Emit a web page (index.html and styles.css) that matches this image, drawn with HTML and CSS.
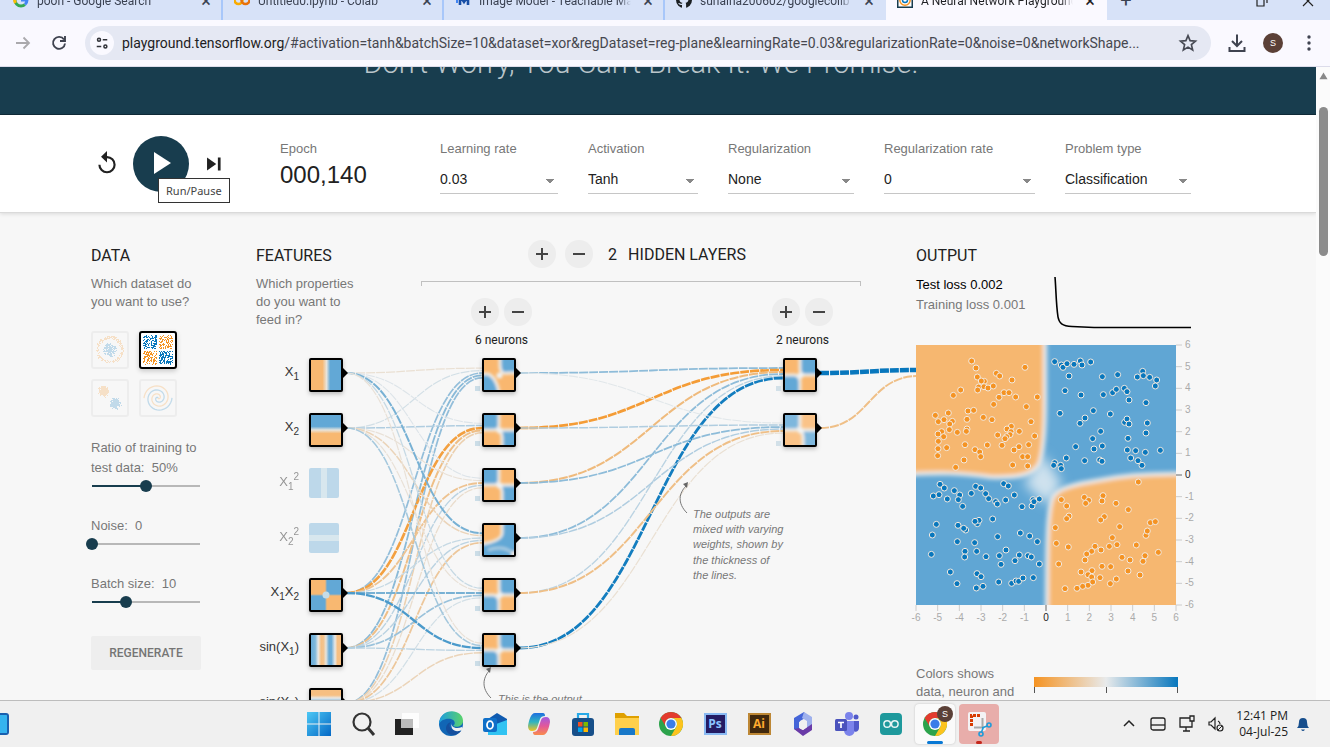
FILE: index.html
```html
<!DOCTYPE html>
<html lang="en">
<head>
<meta charset="utf-8">
<title>A Neural Network Playground</title>
<link rel="stylesheet" href="styles.css">
</head>
<body>
<header class="tabstrip">
  <div class="tab">
    <svg class="favicon" viewBox="0 0 16 16"><circle cx="8" cy="8" r="6" fill="none" stroke="#34a853" stroke-width="3" stroke-dasharray="14 40" stroke-dashoffset="-5"/><path d="M2.500 11A6 6 0 0 1 2.500 5" fill="none" stroke="#fbbc05" stroke-width="3"/><path d="M3 4A6 6 0 0 1 12 4" fill="none" stroke="#ea4335" stroke-width="3"/><path d="M8 8h6a6 6 0 0 1-2 4.500" fill="none" stroke="#4285f4" stroke-width="3"/></svg>
    <span class="tab-title">pooh - Google Search</span><button class="tab-close" aria-label="Close tab">×</button>
  </div>
  <div class="tab">
    <svg class="favicon" viewBox="0 0 16 16"><circle cx="4.500" cy="8" r="4" fill="none" stroke="#f9ab00" stroke-width="2.600"/><circle cx="11.500" cy="8" r="4" fill="none" stroke="#e8710a" stroke-width="2.600"/></svg>
    <span class="tab-title">Untitled0.ipynb - Colab</span><button class="tab-close" aria-label="Close tab">×</button>
  </div>
  <div class="tab">
    <svg class="favicon" viewBox="0 0 16 16"><path d="M5 13V4l4 6 4-6v9" fill="none" stroke="#174ea6" stroke-width="2.600"/><path d="M2 7v4" stroke="#4285f4" stroke-width="2"/></svg>
    <span class="tab-title">Image Model - Teachable Machine</span><button class="tab-close" aria-label="Close tab">×</button>
  </div>
  <div class="tab">
    <svg class="favicon" viewBox="0 0 16 16"><circle cx="8" cy="8" r="8" fill="#1b1f23"/><path d="M6 16v-3C3 13.500 3 11.500 2 11c2-.5 2 1 4 .8l.4-1C3 10.500 3 7 4.200 5.500 4 4 4.300 3.500 4.500 3L6.500 4h3l2-1c.3.800.4 1.500.2 2.500C13 7.500 12.500 10.500 9.600 10.800c.5.5.5 1.200.5 2V16z" fill="#d7e2f8"/></svg>
    <span class="tab-title">sunaina200602/googlecolib</span><button class="tab-close" aria-label="Close tab">×</button>
  </div>
  <div class="tab tab-active">
    <svg class="favicon" viewBox="0 0 16 16"><path d="M0 0h16v16H0z" fill="#183d4e"/><path d="M1.500 1.500h13v13h-13z" fill="#fff"/><circle cx="8" cy="8" r="5.200" fill="none" stroke="#f59322" stroke-width="1.500"/><circle cx="8" cy="8" r="2.500" fill="none" stroke="#0877bd" stroke-width="1.500"/></svg>
    <span class="tab-title">A Neural Network Playground</span><button class="tab-close" aria-label="Close tab">×</button>
  </div>
  <button class="new-tab" aria-label="New tab">+</button>
  <div class="window-buttons">
    <svg viewBox="0 0 14 14"><path d="M2 4h7v8H2zM5 2h7v7" fill="none" stroke="#222" stroke-width="1.200"/></svg>
    <svg viewBox="0 0 14 14"><path d="M2 2l10 10M12 2L2 12" stroke="#222" stroke-width="1.200"/></svg>
  </div>
</header>

<div class="toolbar">
  <button class="tool" aria-label="Forward"><svg viewBox="0 0 24 24"><path d="M5 12h13M12.500 6.500 18 12l-5.500 5.500" fill="none" stroke="#aaa9ad" stroke-width="1.800"/></svg></button>
  <button class="tool" aria-label="Reload"><svg viewBox="0 0 24 24"><path d="M17 8.500A6 6 0 1 0 18 12.500M18 5v5h-5" fill="none" stroke="#3f4350" stroke-width="1.900"/></svg></button>
  <div class="omnibox">
    <span class="site-info"><svg viewBox="0 0 24 24" fill="none" stroke="#303238" stroke-width="2"><circle cx="8" cy="7.500" r="2"/><path d="M13 7.500h6M5 16.500h6"/><circle cx="16.500" cy="16.500" r="2"/></svg></span>
    <span class="url"><span class="host">playground.tensorflow.org</span>/#activation=tanh&amp;batchSize=10&amp;dataset=xor&amp;regDataset=reg-plane&amp;learningRate=0.03&amp;regularizationRate=0&amp;noise=0&amp;networkShape...</span>
    <svg class="star" viewBox="0 0 24 24"><path d="M12 4l2.300 5.400 5.900.5-4.500 3.900 1.400 5.800L12 16.500l-5.100 3.100 1.400-5.800-4.500-3.900 5.900-.5z" fill="none" stroke="#474a54" stroke-width="1.800"/></svg>
  </div>
  <button class="tool download" aria-label="Downloads"><svg viewBox="0 0 24 24"><path d="M12 3.500v11M7 10l5 5 5-5M4.500 16v4h15v-4" fill="none" stroke="#3f4350" stroke-width="2"/></svg></button>
  <button class="avatar" aria-label="Profile">S</button>
  <button class="tool" aria-label="Menu"><svg viewBox="0 0 24 24" fill="#3f4350"><circle cx="12" cy="6" r="1.700"/><circle cx="12" cy="12" r="1.700"/><circle cx="12" cy="18" r="1.700"/></svg></button>
</div>

<div class="viewport">
<div class="page">
  <div class="banner"><p>Don’t Worry, You Can’t Break It. We Promise.</p></div>

  <div class="controls">
    <div class="run-buttons">
      <button class="icon-button" aria-label="Reset"><svg viewBox="0 0 24 24"><path d="M12 5.500V1L6.500 6.300 12 11.500V7.500a6 6 0 1 1-6 6H4a8 8 0 1 0 8-8z" fill="#212121"/></svg></button>
      <button class="play" aria-label="Run/Pause"><svg viewBox="0 0 36 36"><path d="M11 17v11l17-11L11 6z" fill="#fff"/></svg><span class="tooltip">Run/Pause</span></button>
      <button class="icon-button" aria-label="Step"><svg viewBox="0 0 24 24"><path d="M6.500 7v12l8.500-6zM16.500 7H19v12h-2.500z" fill="#212121"/></svg></button>
    </div>
    <div class="epoch"><div class="label">Epoch</div><div class="epoch-value">000,140</div></div>
    <div class="fields">
      <label class="field f118"><span class="label">Learning rate</span><select><option>0.03</option></select></label>
      <label class="field f110"><span class="label">Activation</span><select><option>Tanh</option></select></label>
      <label class="field f126"><span class="label">Regularization</span><select><option>None</option></select></label>
      <label class="field f151"><span class="label">Regularization rate</span><select><option>0</option></select></label>
      <label class="field f126"><span class="label">Problem type</span><select><option>Classification</option></select></label>
    </div>
  </div>

  <main class="main">
    <section class="data">
      <h2>Data</h2>
      <p class="hint">Which dataset do you want to use?</p>
      <div class="datasets">
        <button class="dataset" aria-label="Circle"><svg id="set-circle" viewBox="0 0 34 34"></svg></button>
        <button class="dataset selected" aria-label="Exclusive or"><svg id="set-xor" viewBox="0 0 34 34"></svg></button>
        <button class="dataset" aria-label="Gaussian"><svg id="set-gauss" viewBox="0 0 34 34"></svg></button>
        <button class="dataset" aria-label="Spiral"><svg id="set-spiral" viewBox="0 0 34 34"></svg></button>
      </div>
      <div class="slider"><label for="ratio">Ratio of training to test data:&nbsp; 50%</label><input id="ratio" type="range" min="10" max="90" value="50" style="--fill:50%"></div>
      <div class="slider"><label for="noise">Noise:&nbsp; 0</label><input id="noise" type="range" min="0" max="50" value="0" style="--fill:0%"></div>
      <div class="slider"><label for="batch">Batch size:&nbsp; 10</label><input id="batch" type="range" min="1" max="30" value="10" style="--fill:31%"></div>
      <button class="regenerate">Regenerate</button>
    </section>

    <section class="network">
      <div class="network-head">
        <div class="features-intro"><h2>Features</h2><p class="hint">Which properties do you want to feed in?</p></div>
        <div class="hidden-head">
          <div class="layer-count">
            <button class="round plus" aria-label="Add layer"></button><button class="round" aria-label="Remove layer"></button>
            <span>2</span><span>Hidden layers</span>
          </div>
          <div class="bracket"></div>
          <div class="layer-controls">
            <div class="layer"><div class="pair"><button class="round plus" aria-label="Add neuron"></button><button class="round" aria-label="Remove neuron"></button></div>6 neurons</div>
            <div class="layer"><div class="pair"><button class="round plus" aria-label="Add neuron"></button><button class="round" aria-label="Remove neuron"></button></div>2 neurons</div>
          </div>
        </div>
      </div>
      <svg class="graph" viewBox="256 350 660 390">
        <defs>
          <filter id="soft" x="-30%" y="-30%" width="160%" height="160%"><feGaussianBlur stdDeviation="1.400"/></filter>
          <filter id="shadow" x="-30%" y="-30%" width="160%" height="170%"><feDropShadow dx="0" dy="2" stdDeviation="2" flood-opacity=".25"/></filter>
          <clipPath id="cell"><rect width="30" height="30"/></clipPath>
          <linearGradient id="gx"><stop offset=".38" stop-color="#f8b871"/><stop offset=".52" stop-color="#e8e4dc"/><stop offset=".64" stop-color="#62a8d6"/></linearGradient>
          <linearGradient id="gy" x2="0" y2="1"><stop offset=".38" stop-color="#62a8d6"/><stop offset=".5" stop-color="#e8e4dc"/><stop offset=".62" stop-color="#f8b871"/></linearGradient>
          <linearGradient id="sx"><stop offset="0" stop-color="#6aacd8"/><stop offset=".14" stop-color="#7fb8dc"/><stop offset=".24" stop-color="#e8e8e6"/><stop offset=".34" stop-color="#f6bf82"/><stop offset=".42" stop-color="#f3c48f"/><stop offset=".5" stop-color="#e8e4dc"/><stop offset=".6" stop-color="#6aacd8"/><stop offset=".68" stop-color="#6aacd8"/><stop offset=".8" stop-color="#e8e8e6"/><stop offset=".88" stop-color="#f6bf82"/><stop offset="1" stop-color="#f6bf82"/></linearGradient>
          <linearGradient id="sy" x2="0" y2="1"><stop offset="0" stop-color="#f6bf82"/><stop offset=".17" stop-color="#f6bf82"/><stop offset=".27" stop-color="#e8e8e6"/><stop offset=".4" stop-color="#6aacd8"/><stop offset="1" stop-color="#f6bf82"/></linearGradient>
        </defs>
        <g id="links"></g>
        <g id="nodes"></g>
        <g opacity=".38">
          <rect x="309" y="468" width="30" height="30" rx="2" fill="#62a8d6"/><rect x="321" y="468" width="6" height="30" fill="#a8cfe0"/>
          <rect x="309" y="523" width="30" height="30" rx="2" fill="#62a8d6"/><rect x="309" y="535" width="30" height="6" fill="#a8cfe0"/>
        </g>
        <g class="feature-names" text-anchor="end">
          <text x="299" y="376">X<tspan class="sub" dy="4">1</tspan></text>
          <text x="299" y="431">X<tspan class="sub" dy="4">2</tspan></text>
          <text x="299" y="486" opacity=".5">X<tspan class="sub" dy="4">1</tspan><tspan class="sub" dy="-10">2</tspan></text>
          <text x="299" y="541" opacity=".5">X<tspan class="sub" dy="4">2</tspan><tspan class="sub" dy="-10">2</tspan></text>
          <text x="299" y="596">X<tspan class="sub" dy="4">1</tspan><tspan dy="-4">X</tspan><tspan class="sub" dy="4">2</tspan></text>
          <text x="299" y="651">sin(X<tspan class="sub" dy="4">1</tspan><tspan dy="-4">)</tspan></text>
          <text x="299" y="706">sin(X<tspan class="sub" dy="4">2</tspan><tspan dy="-4">)</tspan></text>
        </g>
        <g fill="none" stroke="#777"><path d="M687 513C677 503 679 493 686 486"/><path d="M491 698C481 688 483 678 489 671"/></g>
        <path d="M688 482l-1 6-4-4zM491 667l-1 6-4-4z" fill="#666"/>
        <text class="note"><tspan x="693" y="518">The outputs are</tspan><tspan x="693" y="533">mixed with varying</tspan><tspan x="693" y="548">weights, shown by</tspan><tspan x="693" y="564">the thickness of</tspan><tspan x="693" y="579">the lines.</tspan></text>
        <text class="note" x="498" y="703">This is the output</text>
      </svg>
    </section>

    <section class="output">
      <h2>Output</h2>
      <div class="metrics">
        <div><div class="test">Test loss 0.002</div><div class="train">Training loss 0.001</div></div>
        <svg class="curve" viewBox="0 0 137 54"><path d="M1 1C2 12 2 28 4 41C5 47 8 50 18 50.500L40 51.500H137" fill="none" stroke="#000" stroke-width="1.600"/></svg>
      </div>
      <svg class="plot" viewBox="916 345 275 290">
        <defs>
          <clipPath id="plot-clip"><rect x="916" y="345" width="260" height="260"/></clipPath>
          <filter id="edge" x="-10%" y="-10%" width="120%" height="120%"><feGaussianBlur stdDeviation="2"/></filter>
          <filter id="haze" x="-100%" y="-100%" width="300%" height="300%"><feGaussianBlur stdDeviation="6"/></filter>
        </defs>
        <g clip-path="url(#plot-clip)">
          <rect x="916" y="345" width="260" height="260" fill="#60a6d4"/>
          <path d="M1024 484L1043 454L1062 484L1048 505Z" fill="#cfe2ee" filter="url(#haze)"/>
          <g filter="url(#edge)" fill="#f6b770" stroke="#eeeceb" stroke-width="4">
            <path d="M900 330H1045V400C1045 430 1044 452 1039 464C1033 475 1018 478 990 477C962 473 940 472 900 475Z"/>
            <path d="M1190 474C1150 473 1125 475 1100 480C1075 484 1058 488 1053 497C1048 508 1047 530 1047 620H1190Z"/>
          </g>
          <g id="points"></g>
        </g>
        <g id="axes" class="axes"></g>
      </svg>
      <div class="legend">
        <p>Colors shows data, neuron and weight values.</p>
        <div class="scale"><div class="gradient"></div><div class="ticks"><i></i><i></i><i></i></div><div class="scale-labels"><span>-1</span><span>0</span><span>1</span></div></div>
      </div>
    </section>
  </main>
</div>
<div class="scrollbar"><svg viewBox="0 0 10 8"><path d="M5 0l4.500 7.500h-9z" fill="#888"/></svg><div class="thumb"></div></div>
</div>

<footer class="taskbar">
  <div class="widget"></div>
  <nav class="apps">
    <button aria-label="Start"><svg viewBox="0 0 26 26"><defs><linearGradient id="win" x2="1" y2="1"><stop stop-color="#4cc8f5"/><stop offset="1" stop-color="#0568c5"/></linearGradient></defs><path d="M1 1h11.500v11.500H1zM13.500 1H25v11.500H13.500zM1 13.500h11.500V25H1zM13.500 13.500H25V25H13.500z" fill="url(#win)"/></svg></button>
    <button aria-label="Search"><svg viewBox="0 0 26 26"><circle cx="12" cy="11" r="8.500" fill="none" stroke="#333" stroke-width="2.200"/><path d="M18 17l6 7" stroke="#333" stroke-width="3"/></svg></button>
    <button aria-label="Task view"><svg viewBox="0 0 26 26"><path d="M8 2h17v15H8z" fill="#fdfdfd"/><path d="M1 8h18v16H1z" fill="#222"/><path d="M7 8h12v9H7z" fill="#bbb"/></svg></button>
    <button aria-label="Edge"><svg viewBox="0 0 26 26"><defs><linearGradient id="edg" x2="1"><stop stop-color="#1c9ce0"/><stop offset="1" stop-color="#5ad36a"/></linearGradient></defs><circle cx="13" cy="13" r="12" fill="#1166b5"/><path d="M1 14C1-4 25-3 25 10c0 5-6 7-10 5 3-2 2-6-2-7C8 7 2 9 1 14z" fill="url(#edg)"/><path d="M13 11c-4 4 0 10 10 9-5 6-14 5-15-2 0-4 2-6 5-7z" fill="#154f9e"/><path d="M14 11c-2 4 3 8 10 5l1 2c-6 5-14 1-11-7z" fill="#f0f0f0"/></svg></button>
    <button aria-label="Outlook"><svg viewBox="0 0 26 26"><path d="M6 8l9-6 10 6v16H6z" fill="#0f5ab0"/><path d="M6 16l19-7v15H6z" fill="#31c3f2"/><rect x="1" y="7" width="14" height="14" rx="2" fill="#0f6fc8"/><ellipse cx="8" cy="14" rx="3" ry="3.800" fill="none" stroke="#fff" stroke-width="1.800"/></svg></button>
    <button aria-label="Copilot"><svg viewBox="0 0 26 26"><defs><linearGradient id="cpa" x2="0" y2="1"><stop stop-color="#1f6fe0"/><stop offset=".5" stop-color="#2fb5c0"/><stop offset="1" stop-color="#f3c31e"/></linearGradient><linearGradient id="cpb" x2="0" y2="1"><stop stop-color="#a35be0"/><stop offset=".5" stop-color="#e2589a"/><stop offset="1" stop-color="#f98c4c"/></linearGradient></defs><path d="M9 2h8q2 0 2 3-4 0-5 3l-3 9q-1 3-5 3-4 0-4-5C3 9 5 2 9 2z" fill="url(#cpa)"/><path d="M17 24H9q-2 0-2-3 4 0 5-3l3-9q1-3 5-3 4 0 4 5c-1 6-3 13-7 13z" fill="url(#cpb)"/></svg></button>
    <button aria-label="Store"><svg viewBox="0 0 26 26"><path d="M8 8V3h10v5" fill="none" stroke="#26a9e8" stroke-width="2.200"/><rect x="2" y="7" width="22" height="18" rx="3" fill="#174f89"/><path d="M8 11h4.500v4.500H8z" fill="#f25022"/><path d="M13.500 11H18v4.500h-4.500z" fill="#7fba00"/><path d="M8 16.500h4.500V21H8z" fill="#00a4ef"/><path d="M13.500 16.500H18V21h-4.500z" fill="#ffb900"/></svg></button>
    <button aria-label="File Explorer"><svg viewBox="0 0 26 26"><path d="M1 2h9l3 3h12v8H1z" fill="#dfa000"/><path d="M1 7h24v17H1z" fill="#ffd04b"/><path d="M5 24v-5q0-2 2-2h12q2 0 2 2v5z" fill="#1878c8"/></svg></button>
    <button aria-label="Chrome"><svg viewBox="0 0 26 26"><circle cx="13" cy="13" r="12" fill="#2ca34c"/><path d="M2.600 7A12 12 0 0 1 23.400 7H13a6 6 0 0 0-5.500 8z" fill="#e33b2e"/><path d="M23.400 7A12 12 0 0 1 13 25l5.200-9A6 6 0 0 0 13 7z" fill="#fcc31e"/><circle cx="13" cy="13" r="6" fill="#fff"/><circle cx="13" cy="13" r="4.600" fill="#3b7de9"/></svg></button>
    <button aria-label="Photoshop"><span class="adobe ps">Ps</span></button>
    <button aria-label="Illustrator"><span class="adobe ai">Ai</span></button>
    <button aria-label="Microsoft 365"><svg viewBox="0 0 26 26"><path d="M14 1L4 7v11l6 3V10l7-4z" fill="#4565d8"/><path d="M14 1l8 5v12l-5 4V10l-5-3z" fill="#9fb1ed"/><path d="M4 18l9 7 9-6v-6l-9 6-4-2z" fill="#6a3ba8"/><path d="M13 9l4 2v5l-4 3-4-2v-6z" fill="#f0f0f0"/></svg></button>
    <button aria-label="Teams"><svg viewBox="0 0 26 26"><circle cx="15" cy="5" r="4" fill="#7b83eb"/><circle cx="22" cy="6" r="2.500" fill="#5059c9"/><path d="M10 10h11v8c0 9-11 9-11 1z" fill="#7b83eb"/><path d="M20 10h5v7c0 4-5 5-5 2z" fill="#5059c9"/><rect x="1" y="8" width="12" height="12" rx="1.500" fill="#4b53bc"/><path d="M4 11.500h6M7 11.500V17" stroke="#fff" stroke-width="1.700"/></svg></button>
    <button aria-label="Arduino"><svg viewBox="0 0 26 26"><rect x="2" y="2" width="22" height="22" rx="4" fill="#1e999c"/><g fill="none" stroke="#e8f5f5" stroke-width="1.500"><circle cx="9.200" cy="13" r="3.300"/><circle cx="16.800" cy="13" r="3.300"/></g></svg></button>
    <button class="open" aria-label="Chrome profile"><svg viewBox="0 0 26 26"><circle cx="13" cy="13" r="12" fill="#2ca34c"/><path d="M2.600 7A12 12 0 0 1 23.400 7H13a6 6 0 0 0-5.500 8z" fill="#e33b2e"/><path d="M23.400 7A12 12 0 0 1 13 25l5.200-9A6 6 0 0 0 13 7z" fill="#fcc31e"/><circle cx="13" cy="13" r="6" fill="#fff"/><circle cx="13" cy="13" r="4.600" fill="#3b7de9"/></svg><span class="badge">S</span></button>
    <button class="alert" aria-label="Snipping Tool"><svg viewBox="0 0 26 26"><rect x="2" y="1" width="18" height="19" rx="2" fill="#f4f2f4"/><path d="M5.500 15V4.500H15" fill="none" stroke="#d83b01" stroke-width="3" stroke-dasharray="3 1"/><path d="M8 16.500h8.500V7" fill="none" stroke="#aaa" stroke-width="2"/><g fill="none" stroke="#209bd8" stroke-width="1.600"><circle cx="15" cy="23" r="2"/><circle cx="23" cy="14" r="2"/><path d="M15.500 21l2-5M21 15l-5 2"/></g></svg></button>
  </nav>
  <div class="tray">
    <svg viewBox="0 0 18 18"><path d="M4 11l5-5 5 5" fill="none" stroke="#222" stroke-width="1.500"/></svg>
    <svg viewBox="0 0 18 18"><rect x="2" y="3" width="14" height="12" rx="2" fill="none" stroke="#222" stroke-width="1.300"/><path d="M2 10h14" stroke="#222" stroke-width="1.300"/></svg>
    <svg viewBox="0 0 18 18"><path d="M12 3H2v9h10M5 16h7M8 12v4M12 1h4v5h-4zM14 6v6h-2" fill="none" stroke="#222" stroke-width="1.300"/></svg>
    <svg viewBox="0 0 18 18"><path d="M2 7h2l4-4v11l-4-4H2zM11 6q2 1 2 3" fill="none" stroke="#222" stroke-width="1.200"/><circle cx="13" cy="13" r="3" fill="#f0f0f0" stroke="#222" stroke-width="1.200"/><path d="M11 15l4-4" stroke="#222"/></svg>
    <div class="clock">12:41 PM<br>04-Jul-25</div>
    <svg viewBox="0 0 18 18"><path d="M3 13q2-2 2-6a4 4 0 0 1 8 0q0 4 2 6zM7 14.500h4q-2 3-4 0z" fill="#174e8c"/></svg>
  </div>
</footer>
<script src="script.js"></script>
</body>
</html>
```
FILE: styles.css
```css
* { box-sizing: border-box; }
body { margin: 0; height: 100vh; display: flex; flex-direction: column; overflow: hidden; font-family: "Liberation Sans", Arial, sans-serif; font-size: 13px; color: #212121; background: #f7f7f7; }
button { font: inherit; color: inherit; background: none; border: 0; padding: 0; }
h2 { margin: 0; font: 400 16px/20px Roboto, sans-serif; text-transform: uppercase; }
p { margin: 0; }
svg { display: block; }

.tabstrip { flex: none; height: 20px; display: flex; background: #d7e2f8; padding-left: 2px; font: 12px Roboto, sans-serif; color: #3b4252; overflow: hidden; }
.tab { flex: 0 1 221px; min-width: 0; height: 20px; display: flex; align-items: flex-start; padding: 0 9px 0 11px; border-right: 2px solid #a8c7fa; }
.tab:nth-child(4) { border-color: transparent; border-bottom-right-radius: 8px; }
.tab-active { background: #faf9ff; border-color: transparent; border-radius: 0; color: #1f2024; }
.favicon { width: 16px; height: 16px; margin: -8px 8px 0 0; flex: none; }
.tab-title { flex: 1; min-width: 0; white-space: nowrap; overflow: hidden; line-height: 18px; margin-top: -8px; height: 18px; mask-image: linear-gradient(90deg, #000 92%, transparent); }
.tab-close { width: 12px; margin: -10px 0 0 11px; font-size: 18px; line-height: 22px; }
.new-tab { width: 20px; margin: -11px 0 0 9px; font-size: 20px; line-height: 22px; height: 22px; }
.window-buttons { margin: -6px 15px 0 auto; display: flex; gap: 32px; }
.window-buttons svg { width: 14px; height: 14px; }

.toolbar { flex: none; height: 47px; display: flex; align-items: center; background: #faf9ff; border-bottom: 1px solid #dcdcea; padding: 0 9px 0 11px; }
.tool { width: 24px; height: 24px; flex: none; margin-right: 12px; }
.tool:last-child { margin: 0 0 0 14px; }
.tool svg { width: 24px; height: 24px; }
.omnibox { flex: 1; min-width: 0; height: 34px; margin: 0 14px 0 2px; border-radius: 17px; background: #e5e8f3; display: flex; align-items: center; padding: 0 12px 0 5px; }
.site-info { width: 24px; height: 24px; border-radius: 50%; background: #faf9ff; flex: none; }
.site-info svg { width: 18px; height: 18px; margin: 3px; }
.url { flex: 1; min-width: 0; margin-left: 8px; font: 14px/20px Roboto, sans-serif; white-space: nowrap; overflow: hidden; color: #46474f; }
.host { color: #1d1d22; }
.star { width: 22px; height: 22px; flex: none; }
.download { margin-right: 14px; }
.avatar { width: 20px; height: 20px; flex: none; border-radius: 50%; background: #5b4037; color: #fff; font-size: 9px; }

.viewport { flex: 1; min-height: 0; display: flex; }
.page { flex: 1; min-width: 0; overflow: hidden; background: #f7f7f7; }
.scrollbar { width: 14px; background: #fbfbfb; padding: 5px 2px 0 3px; }
.scrollbar svg { width: 9px; height: 8px; }
.thumb { height: 149px; margin-top: 27px; border-radius: 5px; background: #8b8b8b; }

.banner { height: 48px; background: #183d4e; border-bottom: 1px solid #102b38; overflow: hidden; padding: 0 125px 0 91px; text-align: center; }
.banner p { margin-top: -22px; font: 300 29px/36px Roboto, sans-serif; color: #bac5ca; white-space: nowrap; }

.controls { height: 98px; background: #fff; border-bottom: 1px solid #dadada; box-shadow: 0 1px 4px rgba(0,0,0,.12); display: flex; padding: 21px 125px 0 91px; position: relative; z-index: 1; }
.run-buttons { width: 189px; flex: none; display: flex; align-items: flex-start; gap: 11px; padding-left: 3px; }
.icon-button { width: 26px; height: 26px; margin-top: 14px; }
.icon-button svg { width: 26px; height: 26px; }
.run-buttons .icon-button:first-child { width: 28px; }
.play { width: 56px; height: 56px; border-radius: 50%; background: #183d4e; position: relative; }
.play svg { width: 36px; height: 36px; margin: 0 auto; }
.tooltip { position: absolute; left: 25px; top: 42px; padding: 0 7px; line-height: 23px; border: 1px solid #333; background: #fff; font-family: "Noto Sans", sans-serif; font-size: 11px; color: #444; white-space: nowrap; }
.label { display: block; line-height: 18px; color: #777; }
.epoch { width: 160px; flex: none; padding-top: 4px; }
.epoch-value { font-size: 24px; line-height: 34px; }
.fields { flex: 1; display: flex; gap: 30px; padding-top: 4px; }
.field { min-width: 0; }
.f110 { flex: 110 1 0; }
.f118 { flex: 118 1 0; }
.f126 { flex: 126 1 0; }
.f151 { flex: 151 1 0; }
select { appearance: none; width: 100%; height: 29px; margin-top: 7px; padding: 0; border: 0; border-bottom: 1px solid #c6c6c6; border-radius: 0; background: linear-gradient(to bottom left, #888 50%, transparent 51%) calc(100% - 8px) 14px / 5px 4px no-repeat, linear-gradient(to bottom right, #888 50%, transparent 51%) calc(100% - 3px) 14px / 5px 4px no-repeat; font: 14px "Liberation Sans", Arial, sans-serif; color: #222; }

.main { display: flex; padding: 27px 125px 0 91px; }
.data { width: 110px; flex: none; margin-right: 55px; padding-top: 6px; }
.hint { margin-top: 9px; line-height: 18px; color: #777; }
.datasets { display: grid; grid-template-columns: 38px 38px; gap: 10px; margin: 20px 0; }
.dataset { width: 38px; height: 38px; border: 2px solid #ccc; border-radius: 3px; opacity: .22; }
.dataset.selected { border-color: #000; opacity: 1; background: #fff; box-shadow: 0 2px 5px rgba(0,0,0,.2); }
.slider { margin-bottom: 23px; color: #777; line-height: 20px; }
.slider label { display: block; padding: 1px 0 2px; }
input[type="range"] { appearance: none; display: block; width: 120px; height: 12px; margin: 0 0 0 -5px; background: linear-gradient(90deg, #183d4e var(--fill), #b8b8b8 0) center / 108px 2px no-repeat; }
input[type="range"]::-webkit-slider-thumb { appearance: none; width: 12px; height: 12px; border-radius: 50%; background: #183d4e; }
.regenerate { width: 110px; height: 34px; margin-top: 5px; border-radius: 2px; background: #eee; color: #757575; font: 500 12px Roboto, sans-serif; text-transform: uppercase; }

.network { flex: 1; min-width: 0; }
.network-head { display: flex; height: 110px; }
.features-intro { flex: none; width: 110px; margin-right: 55px; padding-top: 6px; }
.hidden-head { flex: 1; margin-right: 55px; }
.layer-count { display: flex; align-items: center; justify-content: center; height: 28px; padding-right: 8px; font: 400 16px Roboto, sans-serif; text-transform: uppercase; }
.layer-count .round { margin-right: 9px; }
.layer-count span { margin-left: 6px; }
.layer-count span + span { margin-left: 11px; }
.round { width: 28px; height: 28px; flex: none; border-radius: 50%; background: linear-gradient(#444, #444) center / 12px 2px no-repeat #ededed; }
.plus { background: linear-gradient(#444, #444) center / 12px 2px no-repeat, linear-gradient(#444, #444) center / 2px 12px no-repeat #ededed; }
.bracket { height: 5px; margin-top: 13px; border: 1px solid #c0c0c0; border-bottom: 0; }
.layer-controls { display: flex; justify-content: space-between; padding: 12px 28px 0 50px; }
.layer { width: 61px; text-align: center; font: 12px/16px Roboto, sans-serif; white-space: nowrap; }
.pair { display: flex; gap: 5px; margin-bottom: 6px; }
.graph { width: 100%; }
.feature-names { font-size: 13px; fill: #333; }
.sub { font-size: 10px; }
.note { font-size: 11px; font-style: italic; fill: #777; }

.output { width: 275px; flex: none; padding-top: 6px; }
.metrics { display: flex; justify-content: space-between; margin-top: 9px; height: 70px; line-height: 20px; }
.test { color: #000; }
.train { color: #777; }
.curve { width: 137px; height: 54px; margin-top: 1px; }
.plot { width: 100%; overflow: visible; }
.axes { font-size: 10px; fill: #aaa; stroke-width: 1; }
.axes .zero { fill: #222; }
.legend { display: flex; justify-content: space-between; margin-top: 30px; line-height: 18px; color: #777; }
.legend p { width: 105px; }
.scale { width: 144px; margin: 12px 13px 0 0; }
.gradient { height: 10px; background: linear-gradient(90deg, #f59322, #e8eaeb 50%, #0877bd); }
.ticks, .scale-labels { display: flex; justify-content: space-between; font-size: 10px; }
.ticks i { width: 1px; height: 6px; background: #555; }
.scale-labels { color: #333; line-height: 26px; }

.taskbar { flex: none; height: 47px; display: flex; align-items: center; background: #f0f0f0; border-top: 1px solid #bdbdbd; }
.widget { width: 9px; height: 22px; border: 2px solid #1a5fae; border-left: 0; border-radius: 0 3px 3px 0; background: #35b3ef; }
.apps { display: flex; gap: 4px; margin-left: 290px; }
.apps button { width: 40px; height: 40px; position: relative; display: grid; place-items: center; border-radius: 4px; }
.apps svg { width: 26px; height: 26px; }
.adobe { width: 23px; height: 22px; border: 2px solid #8abaf3; background: #241b63; color: #8bc3ff; font: bold 12px/18px "Open Sans", sans-serif; }
.ai { border-color: #bd8735; background: #41290e; color: #ffab2e; }
.apps .open { background: #fafafa; box-shadow: 0 0 2px #bbb; }
.open::after, .alert::after { content: ""; position: absolute; bottom: 0; width: 16px; height: 3px; border-radius: 2px; background: #0878d4; }
.apps .alert { background: #e8adaa; }
.alert::after { width: 6px; background: #c4271b; }
.badge { position: absolute; right: 2px; top: 2px; width: 16px; height: 16px; border-radius: 50%; background: #5b4037; color: #fff; font-size: 9px; line-height: 16px; }
.tray { margin-left: auto; padding-right: 18px; display: flex; align-items: center; gap: 11px; }
.tray svg { width: 18px; height: 18px; }
.clock { font: 12px/16px "Open Sans", sans-serif; text-align: right; white-space: nowrap; margin-right: -5px; }
```
FILE: script.js
```js
const ORANGE = [245, 147, 34], GRAY = [232, 234, 235], BLUE = [8, 119, 189];
const byId = id => document.getElementById(id);

function weightColor(w) {
  const end = w < 0 ? ORANGE : BLUE, t = Math.min(1, Math.abs(w));
  return "rgb(" + GRAY.map((c, i) => Math.round(c + (end[i] - c) * t)).join() + ")";
}

function link(x1, y1, x2, y2, w, width) {
  const xm = (x1 + x2) / 2;
  return `<path d="M${x1} ${y1}C${xm} ${y1} ${xm} ${y2} ${x2} ${y2}" fill="none" stroke="${weightColor(w)}" stroke-width="${width || 1 + Math.abs(w) * 1.9}" stroke-dasharray="9 1"/>`;
}

const inputs = [373, 428, 593, 648, 703];
const hidden = [373, 428, 483, 538, 593, 648];
const outputs = [373, 428];
const w1 = [
  [-.12, .1, .38, .42, .38],
  [.05, .25, -.85, -.5, -.3],
  [.05, -.1, -.45, .2, -.15],
  [.5, -.25, .15, .2, -.4],
  [.15, -.1, .5, .35, .1],
  [-.1, .3, .7, .2, -.25]
];
const w2 = [
  [.4, -.9, -.55, .4, .2, .95],
  [.03, .25, .4, .25, -.5, -.12]
];
let links = "";
hidden.forEach((y, j) => inputs.forEach((s, i) => { links += link(346, s, 482, y + (i - 2) * 2.4, w1[j][i]); }));
outputs.forEach((y, j) => hidden.forEach((s, i) => { links += link(519, s, 783, y + (i - 2.5) * 2, w2[j][i]); }));
links += link(820, 373, 918, 370, 1, 4.5) + link(820, 428, 918, 376, -.5);
byId("links").innerHTML = links;

function node(x, y, art) {
  return `<g transform="translate(${x} ${y - 13})"><path d="M32 8l5 5-5 5z"/><rect x="-2" y="-2" width="34" height="34" rx="2" filter="url(#shadow)"/><g clip-path="url(#cell)">${art}</g></g>`;
}
const grad = id => `<rect width="30" height="30" fill="url(#${id})"/>`;
const map = (blue, glow = "", pale = 1) => `<rect width="30" height="30" fill="#fff"/><g opacity="${pale}"><rect width="30" height="30" fill="#f9b76f"/><g filter="url(#soft)"><path d="${blue}" fill="#62a8d6" stroke="#eeeae5" stroke-width="3"/>${glow}</g></g>`;
const centre = '<circle cx="15.500" cy="15.500" r="3" fill="#eef2f4"/>';
const diag = "M15-9H40V15H20Q15 15 15 9ZM-9 15H10Q15 16 15 22V40H-9Z";
const anti = "M-9-9H15V10Q15 15 10 15H-9ZM17 15H40V40H18V22Q17 18 17 15Z";

let nodes = node(311, 373, grad("gx")) + node(311, 428, grad("gy"));
nodes += node(311, 593, '<path d="M0 0h30v30H0z" fill="#f8b871"/><path d="M15 0h15v15H15zM0 15h15v15H0z" fill="#62a8d6"/><path d="M15 0v30M0 15h30" stroke="#b4b2a4"/><circle cx="15" cy="15" r="3.500" fill="#c5dce7"/>');
nodes += node(311, 648, grad("sx")) + node(311, 703, grad("sy"));
const cells = [
  map("M16-9H40V13H24Q16 15 16 5ZM-9 14H4Q14 18 16 40H-9Z", centre),
  map(anti, centre),
  map(anti, centre),
  map("M18-9H40V40H-9V20Q18 17 18 8Z", '<path d="M4 25Q18 20 27 27" fill="none" stroke="#a9cce2" stroke-width="3"/><circle cx="30" cy="29" r="3" fill="#f5eee7"/>'),
  map(diag, centre),
  map(diag, centre)
];
hidden.forEach((y, i) => {
  nodes += `<rect x="475" y="${y + 13}" width="5" height="5" fill="#cbdde7"/>` + node(484, y, cells[i]);
});
nodes += node(785, 373, map(diag, centre)) + node(785, 428, map(anti, centre, .82));
nodes += '<path d="M776 386h5v5h-5zM776 441h5v5h-5z" fill="#d2e0e8"/>';
byId("nodes").innerHTML = nodes;

const upperOrange = [215,393,228,414,232,441,253,454,244,453,236,471,252,470,264,474,280,468,233,480,289,430,299,438,336,450,375,412,182,480,160,496,297,502,312,488,327,488,347,501,412,501,379,530,281,523,204,543,221,541,145,549,106,556,115,575,132,569,157,574,149,582,201,568,250,562,276,569,393,575,148,599,125,605,114,612,131,620,172,607,201,597,199,604,334,589,321,597,333,605,330,614,320,620,315,626,358,604,404,618,293,615,115,634,114,656,140,653,113,677,195,644,225,659,239,666,242,680,262,645,306,646,342,660,357,650,386,644,368,680,383,680,192,690,167,712,338,705,383,708];
const upperBlue = [464,395,484,405,489,412,501,401,522,403,541,393,546,405,572,396,507,438,607,440,653,434,728,424,730,437,712,441,749,442,770,450,766,468,495,482,543,495,610,494,638,488,649,478,673,475,681,485,687,510,738,518,480,550,580,542,631,552,555,564,540,580,674,577,681,567,687,582,742,579,602,604,738,609,578,626,684,625,527,650,582,657,607,648,682,660,707,662,736,667,781,661,499,684,554,692,599,690,606,694,692,684,714,692,726,706,464,698,461,706,482,706,484,716];
const lowerBlue = [120,43,133,54,163,62,117,74,100,78,142,87,179,75,175,89,188,109,214,70,227,49,242,54,257,71,266,86,287,95,292,102,311,41,325,48,343,75,317,90,366,110,396,108,399,89,402,95,418,87,109,163,97,195,94,253,174,166,197,180,191,175,232,161,237,151,225,154,278,147,172,215,224,218,195,244,194,261,230,244,258,260,293,200,298,257,303,283,318,240,345,272,358,255,361,189,389,198,412,215,384,257,394,261,418,282,151,306,171,341,231,311,243,320,229,354,249,349,296,336,335,340,348,333,356,334,369,324,400,323];
const lowerOrange = [715,36,484,89,500,108,507,138,500,146,466,173,469,220,505,231,476,282,553,82,566,91,557,100,609,77,606,93,648,100,685,119,613,140,602,150,659,170,751,158,766,155,738,196,742,183,637,203,651,224,628,229,709,225,775,247,585,229,575,244,560,252,555,270,603,240,666,262,690,270,735,257,729,274,606,289,632,290,684,303,720,315,543,306,576,302,564,314,575,321,600,323,649,327,578,336,631,341,564,346,548,349,531,355,495,356];
function dots(list, top, color) {
  let s = "";
  for (let i = 0; i < list.length; i += 2) s += `<circle cx="${900 + list[i] / 3}" cy="${top + list[i + 1] / 3}" r="3" fill="${color}" stroke="#f2e9df" stroke-width="1"/>`;
  return s;
}
byId("points").innerHTML = dots(upperOrange, 230, "#f59322") + dots(upperBlue, 230, "#0877bd") + dots(lowerBlue, 470, "#0877bd") + dots(lowerOrange, 470, "#f59322");

let axes = "";
for (let v = -6; v <= 6; v++) {
  const x = 1046 + v * 130 / 6, y = 475 - v * 130 / 6, cls = v ? "" : 'class="zero"', line = v ? "#ccc" : "#666";
  axes += `<path d="M${x} 605v6M1176 ${y}h6" stroke="${line}"/><text ${cls} x="${x}" y="621" text-anchor="middle">${v}</text><text ${cls} x="1185" y="${y + 3}">${v}</text>`;
}
byId("axes").innerHTML = axes;

let seed = 7;
const rnd = () => (seed = (seed * 16807) % 2147483647) / 2147483647;
const pixel = (x, y, blue) => `<rect x="${Math.round(x)}" y="${Math.round(y)}" width="1" height="1" fill="${blue ? "#0877bd" : "#f59322"}"/>`;
let circle = "", xor = "", gauss = "", spiral = "";
for (let i = 0; i < 400; i++) {
  const a = rnd() * 6.28, inner = i % 2, r = inner ? rnd() * 7 : 11 + rnd() * 3;
  circle += pixel(16.5 + r * Math.cos(a), 16.5 + r * Math.sin(a), inner);
  const g = (rnd() + rnd()) * 3;
  gauss += pixel((inner ? 22 : 10) + g * Math.cos(a), (inner ? 22 : 10) + g * Math.sin(a), inner);
}
for (let i = 0; i < 560; i++) {
  const x = 2 + rnd() * 29, y = 2 + rnd() * 29;
  if (Math.abs(x - 16.5) > 1 && Math.abs(y - 16.5) > 1) xor += pixel(x, y, (x < 17) === (y < 17));
}
for (const blue of [0, 1]) {
  let d = "";
  for (let t = 0; t <= 60; t++) {
    const r = t / 60 * 14, a = t / 60 * 11 + (blue ? 3.14 : 0);
    d += (t ? "L" : "M") + (17 + r * Math.sin(a)) + " " + (17 + r * Math.cos(a));
  }
  spiral += `<path d="${d}" fill="none" stroke="${blue ? "#0877bd" : "#f59322"}" stroke-width="1.300"/>`;
}
byId("set-circle").innerHTML = circle;
byId("set-xor").innerHTML = xor;
byId("set-gauss").innerHTML = gauss;
byId("set-spiral").innerHTML = spiral;
```
